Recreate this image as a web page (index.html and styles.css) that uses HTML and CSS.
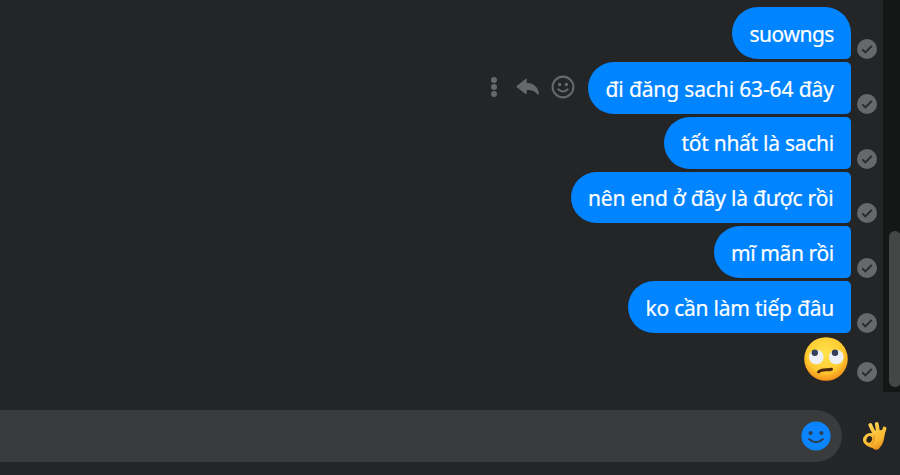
FILE: index.html
```
<!DOCTYPE html>
<html lang="vi">
<head>
<meta charset="utf-8">
<title>Chat</title>
<link rel="stylesheet" href="styles.css">
</head>
<body>
<svg class="defs" width="0" height="0" aria-hidden="true">
  <symbol id="sent" viewBox="0 0 20 20"><circle cx="10" cy="10" r="10" fill="#67686a"/><path d="M5.3 10.4 8.4 13.4 14.8 6.9" fill="none" stroke="#292a2c" stroke-width="2"/></symbol>
</svg>
<div class="chat">
  <main class="messages">
    <div class="row"><div class="bubble first w1">suowngs</div><svg class="sent"><use href="#sent"/></svg></div>
    <div class="row">
      <div class="actions">
        <svg class="dots" viewBox="0 0 8 22"><g fill="#67686a"><circle cx="4" cy="4" r="3"/><circle cx="4" cy="11" r="3"/><circle cx="4" cy="18" r="3"/></g></svg>
        <svg class="reply" viewBox="0 0 24 18"><path d="M.8 8.1 9.5.9Q10.7 0 10.7 1.6V4.9C18 5 22.5 9.5 23 15.8Q22.8 17.4 21.5 16.3C18.7 12.8 15.5 11.9 10.7 12V15.1Q10.5 16.7 9.3 15.8L.8 9.2Q.2 8.7.8 8.1Z" fill="#67686a"/></svg>
        <svg class="react" viewBox="0 0 24 24"><circle cx="12" cy="12" r="10.4" fill="none" stroke="#67686a" stroke-width="2.1"/><circle cx="8.6" cy="9.5" r="1.7" fill="#67686a"/><circle cx="15.4" cy="9.5" r="1.7" fill="#67686a"/><path d="M7.3 14.2Q12 18.7 16.7 14.2" fill="none" stroke="#67686a" stroke-width="2" stroke-linecap="round"/></svg>
      </div>
      <div class="bubble w2">đi đăng sachi 63-64 đây</div><svg class="sent"><use href="#sent"/></svg>
    </div>
    <div class="row"><div class="bubble w3">tốt nhất là sachi</div><svg class="sent"><use href="#sent"/></svg></div>
    <div class="row"><div class="bubble w4">nên end ở đây là được rồi</div><svg class="sent"><use href="#sent"/></svg></div>
    <div class="row"><div class="bubble w5">mĩ mãn rồi</div><svg class="sent"><use href="#sent"/></svg></div>
    <div class="row"><div class="bubble w6">ko cần làm tiếp đâu</div><svg class="sent"><use href="#sent"/></svg></div>
    <div class="row emoji-row">
      <svg class="eyeroll" viewBox="0 0 44 44">
        <defs><radialGradient id="face" cx=".48" cy=".38" r=".64"><stop offset="0" stop-color="#ffe34e"/><stop offset=".65" stop-color="#ffcb31"/><stop offset="1" stop-color="#f28a17"/></radialGradient></defs>
        <circle cx="22" cy="22" r="21.8" fill="url(#face)"/>
        <circle cx="12.3" cy="20" r="7.3" fill="#eceff5"/><circle cx="32.3" cy="20" r="7.3" fill="#eceff5"/>
        <circle cx="10.8" cy="15.8" r="3.2" fill="#343e59"/><circle cx="31" cy="15.8" r="3.2" fill="#343e59"/>
        <path d="M14.5 35C17.5 31.6 23 33.4 27.5 32.2" fill="none" stroke="#4b2811" stroke-width="3" stroke-linecap="round"/>
      </svg>
      <svg class="sent"><use href="#sent"/></svg>
    </div>
  </main>
  <aside class="scroll"><div class="thumb"></div></aside>
</div>
<footer class="composer">
  <div class="field">
    <svg class="smile" viewBox="0 0 30 30"><circle cx="15" cy="15" r="14.6" fill="#0a84ff"/><circle cx="9.6" cy="12" r="2" fill="#303d4d"/><circle cx="20.4" cy="12" r="2" fill="#303d4d"/><path d="M8.2 18.2Q15 24.2 21.8 18.2" fill="none" stroke="#303d4d" stroke-width="2.2" stroke-linecap="round"/></svg>
  </div>
  <svg class="ok" viewBox="0 0 26 30">
    <defs><linearGradient id="hand" gradientUnits="userSpaceOnUse" x1="4" y1="2" x2="20" y2="29"><stop offset="0" stop-color="#ffd65a"/><stop offset=".65" stop-color="#fbb930"/><stop offset="1" stop-color="#df8419"/></linearGradient></defs>
    <g fill="none" stroke="url(#hand)" stroke-linecap="round" stroke-width="3.8">
      <path d="M13 14 8.3 4"/><path d="M16.5 14 14.8 3"/><path d="M19.8 16 22.6 7.5"/>
    </g>
    <path d="M2.6 15C5.5 11.3 9 11.6 11.5 12.8L11.3 9.5 22.6 9C22.8 17 21.5 23 17.3 27.2 15 29.7 12.2 28.8 10.2 26.7 6.2 26.2.5 22.8 1 18.5 1.2 17 1.6 16 2.6 15Z" fill="url(#hand)"/>
    <ellipse cx="7.3" cy="18.4" rx="2.7" ry="3.4" transform="rotate(25 7.3 18.4)" fill="#28231d"/>
    <path d="M12 14.5Q13.2 20 9.5 23.5" fill="none" stroke="#d98a1e" stroke-width="1"/>
  </svg>
</footer>
</body>
</html>
```
FILE: styles.css
```
* { box-sizing: border-box; }
body {
  margin: 0;
  width: 900px;
  height: 475px;
  overflow: hidden;
  background: #242526;
  color: #fff;
  font: 21px/28px "Noto Sans", "Open Sans", sans-serif;
}
svg { display: block; flex: none; }
.defs { position: absolute; }
.chat { display: flex; height: 392px; }
.messages {
  flex: 1;
  display: flex;
  flex-direction: column;
  gap: 3px;
  padding: 7.3px 5.5px 0 0;
}
.row {
  display: flex;
  justify-content: flex-end;
  align-items: flex-end;
  height: 51.8px;
  flex: none;
}
.bubble {
  height: 51.8px;
  padding: 12.5px 0 0 17.5px;
  border-radius: 26px 5px 5px 26px;
  background: #0084ff;
  white-space: nowrap;
  -webkit-text-stroke: 0.2px #fff;
}
.first { border-top-right-radius: 26px; }
.w1 { width: 119px; letter-spacing: -0.48px; }
.w2 { width: 263px; letter-spacing: -0.14px; }
.w3 { width: 187px; letter-spacing: -0.28px; }
.w4 { width: 280.5px; letter-spacing: -0.2px; }
.w5 { width: 137.5px; letter-spacing: -0.4px; }
.w6 { width: 223px; letter-spacing: -0.23px; }
.sent { width: 20px; height: 20px; margin: 0 0 0 6px; }
.actions {
  display: flex;
  align-items: center;
  align-self: center;
  margin: 0 13px 2px 0;
}
.dots { width: 8px; height: 22px; margin-right: 18px; }
.reply { width: 24px; height: 18px; margin-right: 11px; }
.react { width: 24px; height: 24px; }
.emoji-row { height: 46px; align-items: flex-start; }
.eyeroll { width: 44px; height: 44px; margin: 1px 3px 0 0; }
.emoji-row .sent { margin-top: 26px; }
.scroll {
  width: 17.5px;
  background: #151716;
  padding: 231px 0 0 6px;
}
.thumb { width: 12px; height: 156px; border-radius: 6px; background: #454746; }
.composer { display: flex; align-items: center; height: 52px; margin-top: 18px; }
.field {
  display: flex;
  align-items: center;
  justify-content: flex-end;
  width: 842px;
  height: 52px;
  padding-right: 11px;
  border-radius: 0 26px 26px 0;
  background: #3a3b3c;
}
.smile { width: 30px; height: 30px; }
.ok { width: 26px; height: 30px; margin-left: 19.5px; }
```
